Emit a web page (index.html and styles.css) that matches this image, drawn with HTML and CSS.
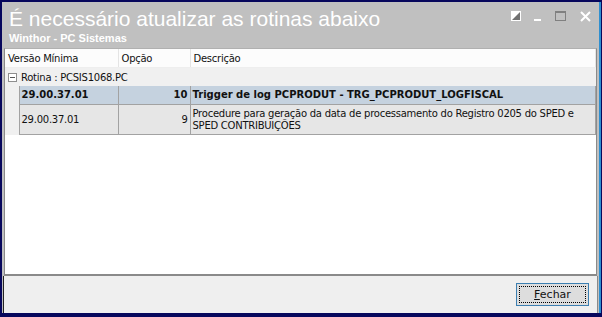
FILE: index.html
```html
<!DOCTYPE html>
<html lang="pt">
<head>
    <meta charset="UTF-8">
    <title>Atualizar rotinas</title>
    <link rel="stylesheet" href="styles.css">
</head>
<body>
    <div class="window">
        <div class="titlebar">
            <h1>É necessário atualizar as rotinas abaixo</h1>
            <p class="subtitle">Winthor - PC Sistemas</p>
            <div class="controls">
                <svg width="10" height="10" viewBox="0 0 10 10"><rect x="0.5" y="0.5" width="9" height="9" fill="#707070" stroke="#fff"/><polygon points="0,0 10,0 0,10" fill="#fff"/></svg>
                <svg width="8" height="10" viewBox="0 0 8 10"><rect x="0" y="8" width="7" height="2" fill="#fff"/></svg>
                <svg width="12" height="10" viewBox="0 0 12 10"><rect x="0.5" y="0.5" width="10" height="9" fill="none" stroke="#808080"/><rect x="0" y="0" width="11" height="2" fill="#808080"/></svg>
                <svg width="11" height="11" viewBox="0 0 11 11"><path d="M1 1 L10 10 M10 1 L1 10" stroke="#fff" stroke-width="2"/></svg>
            </div>
        </div>

        <div class="grid">
            <table>
                <colgroup>
                    <col class="w-indent">
                    <col class="w-versao">
                    <col class="w-opcao">
                    <col>
                </colgroup>
                <thead>
                    <tr>
                        <th colspan="2">Versão Mínima</th>
                        <th>Opção</th>
                        <th>Descrição</th>
                    </tr>
                </thead>
                <tbody>
                    <tr class="group">
                        <td colspan="4"><span class="toggle"></span>Rotina : PCSIS1068.PC</td>
                    </tr>
                    <tr class="row selected">
                        <td class="indent"></td>
                        <td>29.00.37.01</td>
                        <td class="num">10</td>
                        <td>Trigger de log PCPRODUT - TRG_PCPRODUT_LOGFISCAL</td>
                    </tr>
                    <tr class="row">
                        <td class="indent"></td>
                        <td>29.00.37.01</td>
                        <td class="num">9</td>
                        <td>Procedure para geração da data de processamento do Registro 0205 do SPED e SPED CONTRIBUIÇÕES</td>
                    </tr>
                </tbody>
            </table>
        </div>

        <div class="footer">
            <button class="btn"><span><u>F</u>echar</span></button>
        </div>
    </div>
</body>
</html>
```

FILE: styles.css
```css
/* Janela */
body {
    margin: 0;
    background: #07075c;
    font-family: Tahoma, "DejaVu Sans", sans-serif;
}

.window {
    margin: 2px 1px 4px 2px;
    height: 311px;
    background: #c0c0c0;
    border-right: 2px solid #2f8fcf;
    display: flex;
    flex-direction: column;
}

.titlebar {
    position: relative;
    height: 46px;
    padding-left: 7px;
    color: white;
}

.titlebar h1 {
    margin: 0;
    padding-top: 5px;
    font-family: "Liberation Sans", Arial, sans-serif;
    font-weight: normal;
    font-size: 21px;
    line-height: 24px;
}

.subtitle {
    margin: 0;
    font-family: "Liberation Sans", Arial, sans-serif;
    font-weight: bold;
    font-size: 11px;
    line-height: 14px;
}

.controls {
    position: absolute;
    top: 9px;
    right: 8px;
    display: flex;
    align-items: flex-start;
    gap: 13px;
}

/* Grade */
.grid {
    flex: 1;
    margin: 0 2px 0 2px;
    background: white;
    border: 1px solid #8a8a8a;
    border-top: 1px solid #b0b0b0;
    border-bottom: 2px solid #8a8a8a;
}

table {
    width: 100%;
    border-collapse: collapse;
    font-family: "DejaVu Sans", sans-serif;
    font-size: 10px;
    letter-spacing: -0.25px;
    color: #111;
    table-layout: fixed;
}

.w-indent {
    width: 14px;
}

.w-versao {
    width: 99px;
}

.w-opcao {
    width: 72px;
}

th {
    height: 18px;
    padding: 0 3px;
    text-align: left;
    font-weight: normal;
    background: #fcfcfc;
    border-right: 1px solid #e4e4e4;
    border-bottom: 1px solid #eeeeee;
}

tr.group td {
    height: 18px;
    padding: 0 3px;
    background: #f0f0f0;
}

.toggle {
    display: inline-block;
    width: 7px;
    height: 7px;
    margin-right: 4px;
    vertical-align: -1px;
    border: 1px solid #8e8e8e;
    background: linear-gradient(#555, #555) center / 5px 1px no-repeat, white;
}

tr.row td {
    padding: 0 2px;
    background: #e6e6e6;
    border: 1px solid #a2a2a2;
    border-top: none;
    line-height: 12px;
}

tr.row td.indent {
    background: #f0f0f0;
    border: none;
    border-right: 1px solid #a2a2a2;
}

tr.selected td {
    height: 18px;
    background: #c5d2df;
    font-weight: bold;
    letter-spacing: 0;
}

tr.row td.num {
    text-align: right;
}

tr.row:last-child td {
    height: 29px;
}

/* Rodape */
.footer {
    height: 37px;
    margin-left: 1px;
    border-left: 1px solid #222;
    border-right: 1px solid #8a8a8a;
    margin-right: 1px;
    background: #efefef;
    display: flex;
    justify-content: flex-end;
    align-items: center;
    padding-right: 8px;
}

.btn {
    width: 73px;
    height: 23px;
    padding: 2px;
    border: 1px solid #3c7fb1;
    background: #dddddd;
    font-family: "DejaVu Sans", sans-serif;
    font-size: 11px;
    color: #111;
}

.btn span {
    display: block;
    height: 100%;
    line-height: 16px;
    border: 1px dotted #000;
    box-sizing: border-box;
}
```
